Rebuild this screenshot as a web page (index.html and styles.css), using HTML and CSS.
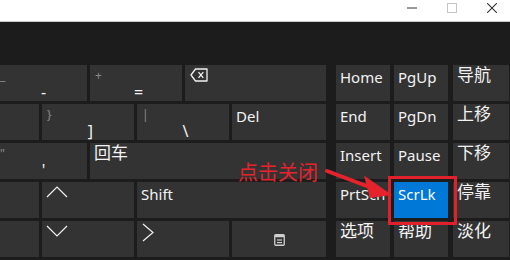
FILE: index.html
```html
<!DOCTYPE html>
<html lang="zh-CN">
<head>
  <meta charset="UTF-8" />
  <title>屏幕键盘</title>
  <link rel="stylesheet" href="styles.css">
</head>
<body>
  <div class="titlebar">
    <svg class="win-icon" width="10" height="10" viewBox="0 0 10 10"><line x1="0" y1="5" x2="10" y2="5" stroke="#333" stroke-width="1"/></svg>
    <svg class="win-icon" width="10" height="10" viewBox="0 0 10 10"><rect x="0.5" y="0.5" width="9" height="9" fill="none" stroke="#c4c4c4" stroke-width="1"/></svg>
    <svg class="win-icon" width="10" height="10" viewBox="0 0 10 10"><path d="M0 0L10 10M10 0L0 10" stroke="#333" stroke-width="1.1"/></svg>
  </div>

  <div class="board">
    <div class="main">
      <div class="row">
        <div class="key sym w2"><span class="shift">_</span><span class="base">-</span></div>
        <div class="key sym w2"><span class="shift">+</span><span class="base">=</span></div>
        <div class="key w3">
          <svg class="bksp" width="18" height="14" viewBox="0 0 18 14">
            <path d="M5.5 1H17V13H5.5L1 7Z" fill="none" stroke="#f2f2f2" stroke-width="1.3" stroke-linejoin="round"/>
            <path d="M8.5 4.2L13.3 9.8M13.3 4.2L8.5 9.8" stroke="#f2f2f2" stroke-width="1.3"/>
          </svg>
        </div>
      </div>
      <div class="row">
        <div class="key w2"></div>
        <div class="key sym w2"><span class="shift">}</span><span class="base">]</span></div>
        <div class="key sym w2"><span class="shift">|</span><span class="base">\</span></div>
        <div class="key w2b">Del</div>
      </div>
      <div class="row">
        <div class="key sym w2"><span class="shift">"</span><span class="base">'</span></div>
        <div class="key w5 zh">回车</div>
      </div>
      <div class="row">
        <div class="key w2"></div>
        <div class="key w2">
          <svg class="chev" width="22" height="12" viewBox="0 0 22 12"><polyline points="1,11 11,1 21,11" fill="none" stroke="#f2f2f2" stroke-width="1.2"/></svg>
        </div>
        <div class="key w4">Shift</div>
      </div>
      <div class="row">
        <div class="key w2"></div>
        <div class="key w2">
          <svg class="chev" width="22" height="12" viewBox="0 0 22 12"><polyline points="1,1 11,11 21,1" fill="none" stroke="#f2f2f2" stroke-width="1.2"/></svg>
        </div>
        <div class="key w2">
          <svg class="chev-r" width="12" height="19" viewBox="0 0 12 19"><polyline points="1,1 11,9.5 1,18" fill="none" stroke="#f2f2f2" stroke-width="1.2"/></svg>
        </div>
        <div class="key w2b centered">
          <svg width="11" height="12" viewBox="0 0 11 12">
            <rect x="0.75" y="0.75" width="9.5" height="10.5" rx="1" fill="none" stroke="#cfcfcf" stroke-width="1.3"/>
            <rect x="0.75" y="0.75" width="9.5" height="2.5" fill="#cfcfcf"/>
            <line x1="3" y1="6" x2="8" y2="6" stroke="#cfcfcf" stroke-width="1.2"/>
            <line x1="3" y1="8.6" x2="8" y2="8.6" stroke="#cfcfcf" stroke-width="1.2"/>
          </svg>
        </div>
      </div>
    </div>

    <div class="nav">
      <div class="row">
        <div class="key c1">Home</div>
        <div class="key c2">PgUp</div>
        <div class="key c3 zh">导航</div>
      </div>
      <div class="row">
        <div class="key c1">End</div>
        <div class="key c2">PgDn</div>
        <div class="key c3 zh">上移</div>
      </div>
      <div class="row">
        <div class="key c1">Insert</div>
        <div class="key c2">Pause</div>
        <div class="key c3 zh">下移</div>
      </div>
      <div class="row">
        <div class="key c1">PrtScn</div>
        <div class="key c2 active">ScrLk</div>
        <div class="key c3 zh">停靠</div>
      </div>
      <div class="row">
        <div class="key c1 zh">选项</div>
        <div class="key c2 zh">帮助</div>
        <div class="key c3 zh">淡化</div>
      </div>
    </div>
  </div>

  <!-- annotation drawn over the keyboard -->
  <div class="note">点击关闭</div>
  <svg class="arrow" width="80" height="50" viewBox="320 160 80 50">
    <line x1="327" y1="171" x2="372" y2="188" stroke="#e5232c" stroke-width="4" stroke-linecap="round"/>
    <polygon points="392,195 364,175.5 370,198" fill="#e5232c"/>
  </svg>
  <div class="mark"></div>
</body>
</html>
```

FILE: styles.css
```css
body {
  margin: 0;
  width: 510px;
  height: 260px;
  overflow: hidden;
  position: relative;
  background: #1c1c1c;
  font-family: "Noto Sans", "Noto Sans CJK SC", sans-serif;
  color: #f2f2f2;
}
.titlebar {
  height: 18px;
  background: #fff;
  border-bottom: 1px solid #c9c9c9;
  display: flex;
  justify-content: flex-end;
  align-items: flex-start;
  gap: 30px;
  padding: 3px 13px 0 0;
}
.board {
  display: flex;
  padding-top: 43px;
}
.main {
  width: 326px;
  overflow: hidden;
  display: flex;
  flex-direction: column;
  gap: 3px;
}
.nav {
  margin-left: 10px;
  display: flex;
  flex-direction: column;
  gap: 3px;
}
.row {
  display: flex;
  justify-content: flex-end;
  gap: 3px;
}
.nav .row {
  justify-content: flex-start;
  gap: 4px;
}
.key {
  flex-shrink: 0;
  height: 36px;
  box-sizing: border-box;
  background: #333333;
  padding: 2px 4px;
  font-size: 15px;
  line-height: 20px;
  white-space: nowrap;
}
.key.zh {
  font-size: 17px;
  padding-top: 0;
}
.w2 { width: 92px; }
.w2b { width: 94px; }
.w3 { width: 141px; }
.w4 { width: 189px; }
.w5 { width: 236px; }
.c1 { width: 54px; }
.c2 { width: 54px; }
.c3 { width: 56px; margin-left: 1px; }
.key.active {
  background: #0078d7;
  color: #fff;
}
.sym {
  display: flex;
  flex-direction: column;
  justify-content: space-between;
  padding: 4px 4px 3px 5px;
}
.shift {
  font-size: 12px;
  line-height: 14px;
  color: #8a8a8a;
}
.base {
  font-size: 16px;
  line-height: 18px;
  text-align: center;
  padding-left: 4px;
}
.bksp {
  display: block;
  margin: 1px 0 0 1px;
}
.chev {
  display: block;
  margin: 2px 0 0 0;
}
.chev-r {
  display: block;
  margin: 0 0 0 1px;
}
.centered {
  display: flex;
  align-items: center;
  justify-content: center;
  padding-top: 4px;
}
.note {
  position: absolute;
  left: 238px;
  top: 162px;
  font-family: "Noto Sans CJK SC", sans-serif;
  font-size: 20px;
  line-height: 20px;
  color: #e5232c;
}
.arrow {
  position: absolute;
  left: 320px;
  top: 160px;
}
.mark {
  position: absolute;
  left: 388px;
  top: 176px;
  width: 63px;
  height: 43px;
  border: 3px solid #e0212b;
}
```
